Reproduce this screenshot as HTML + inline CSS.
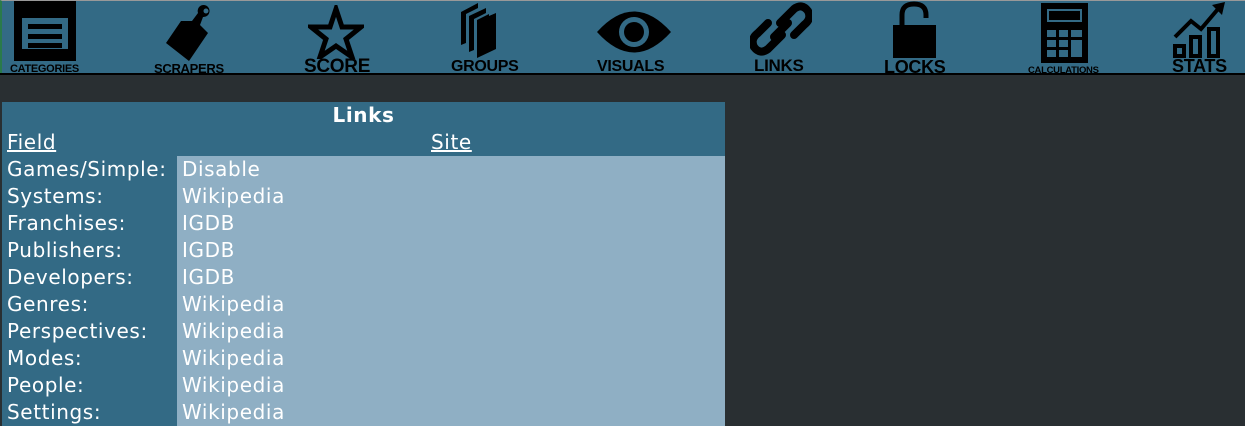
<!DOCTYPE html>
<html><head><meta charset="utf-8"><style>
body{margin:0;width:1245px;height:426px;background:#292f32;overflow:hidden;font-family:"DejaVu Sans","Liberation Sans",sans-serif;position:relative}
#hdr{position:absolute;left:0;top:0;width:1245px;height:74px;background:#336a85;border-top:1px solid #999;box-sizing:border-box;border-left:2px solid #2a7a4a}
#line{position:absolute;left:0;top:73px;width:1245px;height:2px;background:#000}
.lab{position:absolute;font-family:"Liberation Sans",sans-serif;font-weight:bold;color:#000;letter-spacing:-0.3px;white-space:nowrap}
svg{position:absolute}
#tbl{position:absolute;left:2px;top:102px;width:723px;height:324px;background:#336a85;color:#fff;font-size:20px;letter-spacing:0.6px}
.r{position:absolute;left:5px;height:27px;line-height:27px}
.v{position:absolute;left:175px;width:548px;height:27px;line-height:27px;background:#8fafc4;padding-left:5px;box-sizing:border-box}
</style></head><body>
<div id="hdr"></div>
<svg style="left:14px;top:1px" width="62" height="60"><rect x="0" y="0" width="62" height="60" fill="#000"/><rect x="7" y="16" width="48" height="33" fill="#336a85" stroke="#000" stroke-width="2"/><rect x="14" y="23" width="34" height="5" fill="#000"/><rect x="14" y="33" width="34" height="5" fill="#000"/><rect x="14" y="42" width="34" height="5" fill="#000"/></svg>
<div class="lab" style="left:10px;top:63px;font-size:11px">CATEGORIES</div>
<svg style="left:164px;top:3px" width="50" height="60"><path d="M40 2a6 6 0 1 1 -1 12L36 22 44 30 25 58 2 40 17 18 28 18 34 10a6 6 0 0 1 6 -8z" fill="#000"/><circle cx="42" cy="8" r="2.5" fill="#336a85"/></svg>
<div class="lab" style="left:154px;top:61px;font-size:13px">SCRAPERS</div>
<svg style="left:308px;top:5px" width="56" height="54"><path d="M28 4L34 22 53 22 38 34 44 52 28 41 12 52 18 34 3 22 22 22z" fill="none" stroke="#000" stroke-width="5"/></svg>
<div class="lab" style="left:304px;top:56px;font-size:19px">SCORE</div>
<svg style="left:460px;top:2px" width="50" height="56"><path d="M1 10L18 1 18 6 6 12 6 41 1 43z M9 14L26 6 26 11 14 17 14 48 9 50z M17 18L29 12 29 14 36 11 36 47 17 56z" fill="#000"/></svg>
<div class="lab" style="left:451px;top:58px;font-size:16px">GROUPS</div>
<svg style="left:596px;top:5px" width="76" height="52"><path d="M1 27Q38 -14 75 27Q38 68 1 27z" fill="#000"/><circle cx="38" cy="27" r="15" fill="#336a85"/><circle cx="38" cy="27" r="10" fill="#000"/></svg>
<div class="lab" style="left:597px;top:58px;font-size:16px">VISUALS</div>
<svg style="left:750px;top:1px" width="62" height="56"><g fill="none" stroke="#000" stroke-width="8" stroke-linecap="round"><path d="M30 22L44 8Q52 2 58 10Q62 18 54 24L44 34"/><path d="M32 34L18 48Q10 54 4 46Q0 38 8 32L18 22"/><path d="M24 36L38 22"/></g></svg>
<div class="lab" style="left:754px;top:56px;font-size:17px">LINKS</div>
<svg style="left:892px;top:1px" width="46" height="58"><path d="M10 25V14Q10 3 22 3Q34 3 34 14V17" fill="none" stroke="#000" stroke-width="5"/><rect x="1" y="24" width="43" height="33" fill="#000"/></svg>
<div class="lab" style="left:884px;top:57px;font-size:18px">LOCKS</div>
<svg style="left:1041px;top:3px" width="48" height="61"><rect x="0" y="0" width="47" height="60" fill="#000"/><rect x="6" y="6" width="35" height="13" fill="#336a85"/><rect x="8" y="8" width="31" height="9" fill="#000"/><g fill="#336a85"><rect x="6" y="27" width="9" height="7"/><rect x="18" y="27" width="9" height="7"/><rect x="30" y="27" width="11" height="7"/><rect x="6" y="37" width="9" height="7"/><rect x="18" y="37" width="9" height="7"/><rect x="30" y="37" width="11" height="17"/><rect x="6" y="47" width="9" height="7"/><rect x="18" y="47" width="9" height="7"/></g></svg>
<div class="lab" style="left:1028px;top:65px;font-size:9.5px">CALCULATIONS</div>
<svg style="left:1172px;top:1px" width="60" height="58"><path d="M3 36L19 20 29 28 46 8" fill="none" stroke="#000" stroke-width="4"/><path d="M40 4L53 1 50 14z" fill="#000"/><g fill="none" stroke="#000" stroke-width="4"><rect x="3" y="45" width="9" height="10"/><rect x="19" y="36" width="9" height="19"/><rect x="37" y="28" width="9" height="27"/></g></svg>
<div class="lab" style="left:1172px;top:56px;font-size:18px">STATS</div>
<div id="line"></div>
<div id="tbl">
<div style="position:absolute;left:0;width:723px;top:0;height:27px;line-height:27px;text-align:center;font-weight:bold">Links</div>
<div class="r" style="top:27px;text-decoration:underline">Field</div>
<div style="position:absolute;left:429px;top:27px;line-height:27px;text-decoration:underline">Site</div>
<div class="r" style="top:54px">Games/Simple:</div><div class="v" style="top:54px">Disable</div>
<div class="r" style="top:81px">Systems:</div><div class="v" style="top:81px">Wikipedia</div>
<div class="r" style="top:108px">Franchises:</div><div class="v" style="top:108px">IGDB</div>
<div class="r" style="top:135px">Publishers:</div><div class="v" style="top:135px">IGDB</div>
<div class="r" style="top:162px">Developers:</div><div class="v" style="top:162px">IGDB</div>
<div class="r" style="top:189px">Genres:</div><div class="v" style="top:189px">Wikipedia</div>
<div class="r" style="top:216px">Perspectives:</div><div class="v" style="top:216px">Wikipedia</div>
<div class="r" style="top:243px">Modes:</div><div class="v" style="top:243px">Wikipedia</div>
<div class="r" style="top:270px">People:</div><div class="v" style="top:270px">Wikipedia</div>
<div class="r" style="top:297px">Settings:</div><div class="v" style="top:297px">Wikipedia</div>
</div>
</body></html>
